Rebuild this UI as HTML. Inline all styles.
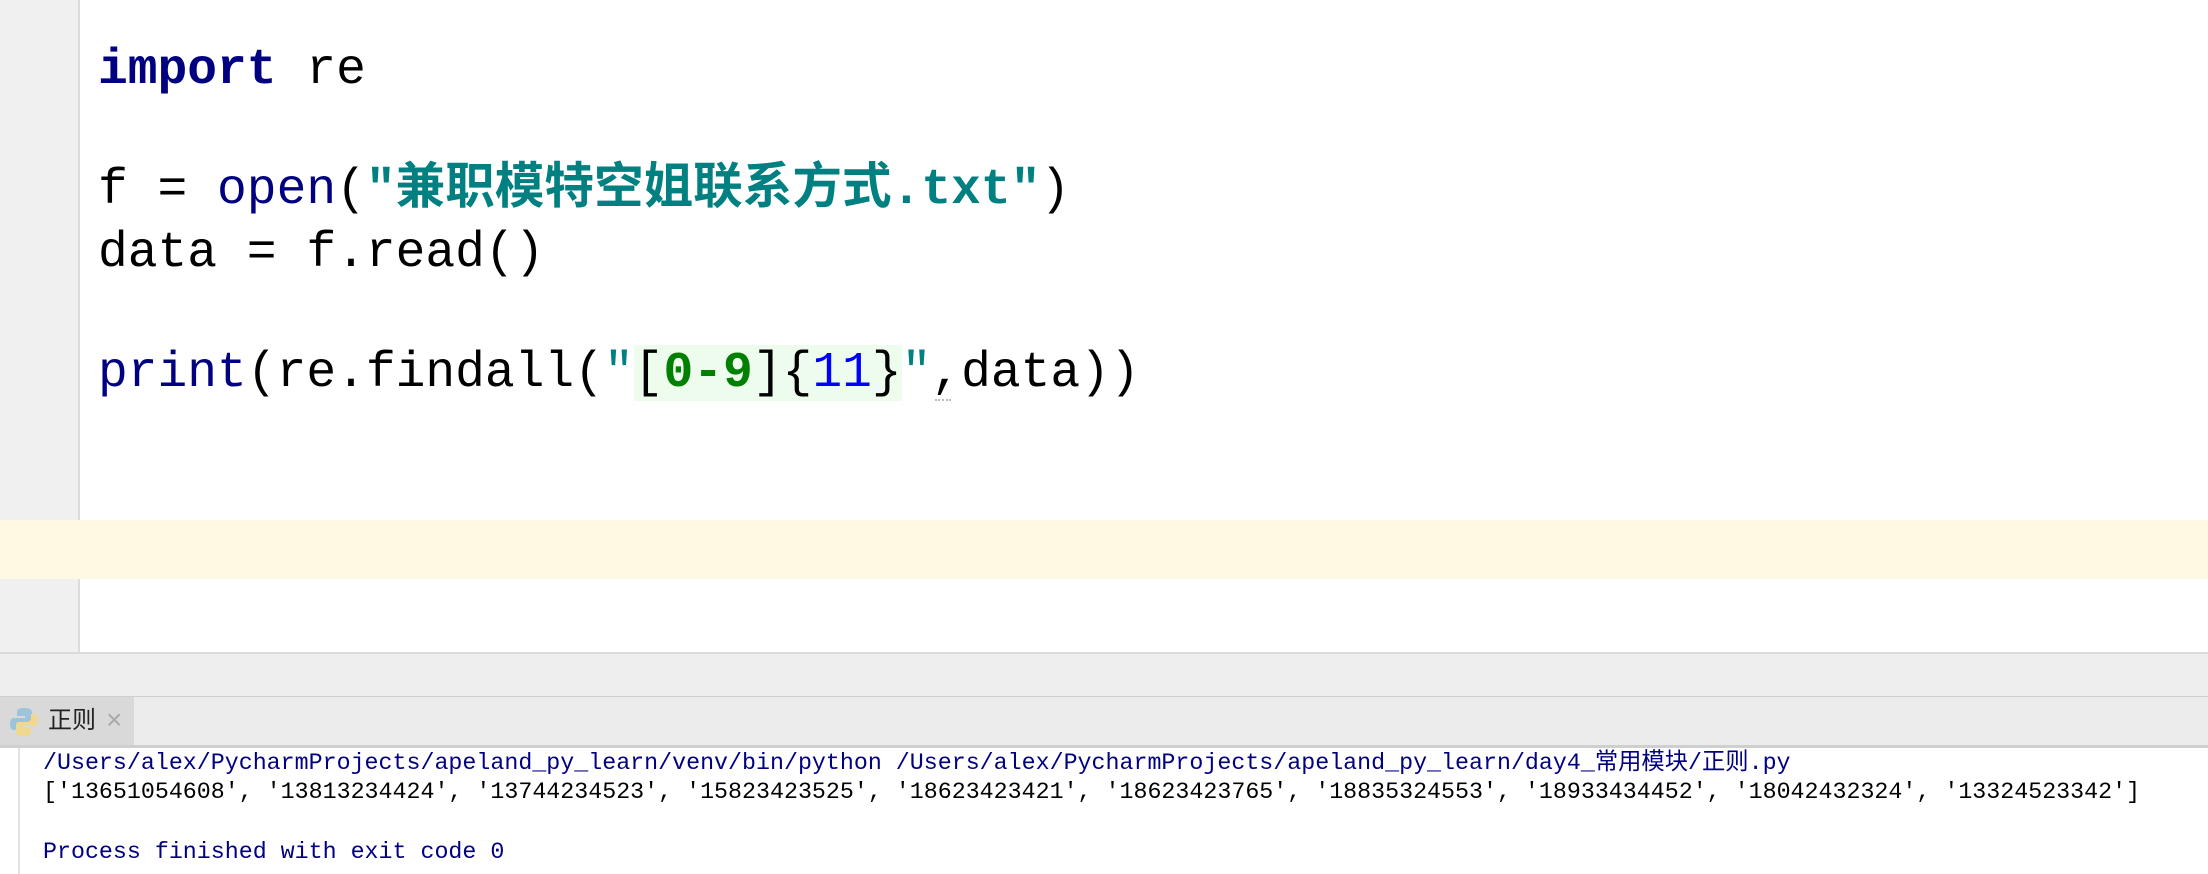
<!DOCTYPE html>
<html><head><meta charset="utf-8"><style>
body{margin:0;width:2208px;height:874px;position:relative;overflow:hidden;background:#fff;font-family:"Liberation Mono","Noto Sans CJK SC",monospace}
.abs{position:absolute}
.code{position:absolute;left:98px;font-size:49.6px;line-height:63px;height:63px;white-space:pre;color:#000}
.kw{color:#000080;font-weight:bold}
.fn{color:#000080}
.str{color:#008080;font-weight:bold}
.con{position:absolute;left:43px;font-size:23.3px;line-height:30px;white-space:pre;color:#000}
</style></head><body>
<div class="abs" style="left:0;top:0;width:78px;height:652px;background:#f0f0f0;border-right:2px solid #dcdcdc"></div>
<div class="abs" style="left:0;top:520px;width:2208px;height:59px;background:#fef9e3"></div>
<div class="code" style="top:39px"><span class="kw">import</span> re</div>
<div class="code" style="top:159px">f = <span class="fn">open</span>(<span class="str">"兼职模特空姐联系方式.txt"</span>)</div>
<div class="code" style="top:222px">data = f.read()</div>
<div class="code" style="top:342px"><span class="fn">print</span>(re.findall(<span class="str" style="font-weight:normal">"</span><span style="background:#edfcec">[<b style="color:#008000">0-9</b>]{<span style="color:#0000ff">11</span>}</span><span class="str" style="font-weight:normal">"</span>,data))</div>
<div class="abs" style="left:935px;top:393px;width:16px;height:6px;border-bottom:2px dotted #bbb"></div>
<div class="abs" style="left:0;top:652px;width:2208px;height:42px;background:#eeeeee;border-top:2px solid #dadada;border-bottom:3px solid #cfcfcf"></div>
<div class="abs" style="left:0;top:697px;width:2208px;height:48px;background:#ececec;border-bottom:3px solid #cfcfcf"></div>
<div class="abs" style="left:0;top:697px;width:134px;height:48px;background:#d9d9d9"></div>
<svg class="abs" style="left:9px;top:706px" width="30" height="32" viewBox="0 0 30 32">
<path d="M15 2c-6 0-7 2-7 4v4h8v2H5c-3 0-4 3-4 6s1 6 4 6h3v-4c0-3 2-4 4-4h8c2 0 3-1 3-3V6c0-2-2-4-8-4z" fill="#9ec3dc"/>
<path d="M15 30c6 0 7-2 7-4v-4h-8v-2h11c3 0 4-3 4-6s-1-6-4-6h-3v4c0 3-2 4-4 4h-8c-2 0-3 1-3 3v7c0 2 2 4 8 4z" fill="#f0d98e"/>
</svg>
<div class="abs" style="left:48px;top:705px;font-family:'Liberation Sans','Noto Sans CJK SC',sans-serif;font-size:24px;line-height:32px;color:#222">正则</div>
<div class="abs" style="left:106px;top:704px;font-family:'Liberation Sans',sans-serif;font-size:28px;line-height:32px;color:#aaa">×</div>
<div class="abs" style="left:18px;top:748px;width:2px;height:126px;background:#e2e2e2"></div>
<div class="con" style="top:748px;color:#000080">/Users/alex/PycharmProjects/apeland_py_learn/venv/bin/python /Users/alex/PycharmProjects/apeland_py_learn/day4_常用模块/正则.py</div>
<div class="con" style="top:777px">['13651054608', '13813234424', '13744234523', '15823423525', '18623423421', '18623423765', '18835324553', '18933434452', '18042432324', '13324523342']</div>
<div class="con" style="top:837px;color:#000080">Process finished with exit code 0</div>
</body></html>
